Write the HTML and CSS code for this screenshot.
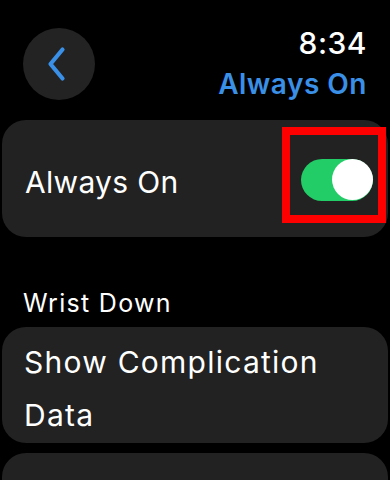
FILE: index.html
```html
<!DOCTYPE html>
<html lang="en">
<head>
<meta charset="utf-8">
<title>Always On</title>
<link rel="stylesheet" href="styles.css">
</head>
<body>
<div class="screen">
  <header class="top">
    <button class="back" aria-label="Back">
      <svg width="72" height="72" viewBox="0 0 72 72" aria-hidden="true">
        <path d="M39.5 21.5 L27.5 36 L39.5 50.5" fill="none" stroke="#3a8fe6" stroke-width="4.2" stroke-linecap="round" stroke-linejoin="round"/>
      </svg>
    </button>
    <div class="titles">
      <div class="time">8:34</div>
      <div class="title">Always On</div>
    </div>
  </header>

  <div class="card toggle-row">
    <span class="label">Always On</span>
    <span class="switch" role="switch" aria-checked="true"><span class="knob"></span></span>
    <span class="highlight" aria-hidden="true"></span>
  </div>

  <div class="section">Wrist Down</div>

  <div class="card multi">Show Complication<br>Data</div>

  <div class="card empty"></div>
</div>
</body>
</html>
```

FILE: styles.css
```css
html, body {
  margin: 0;
  padding: 0;
  background: #000;
}

body {
  font-family: Inter, "Noto Sans", "Liberation Sans", sans-serif;
  color: #fff;
  width: 390px;
  height: 480px;
  overflow: hidden;
}

.screen {
  display: flex;
  flex-direction: column;
  padding: 0 2px;
}

.top {
  height: 120px;
  display: flex;
  justify-content: space-between;
  align-items: flex-start;
  padding: 0 21px;
}

.back {
  margin-top: 28px;
  width: 72px;
  height: 72px;
  border-radius: 50%;
  background: #232323;
  border: 0;
  padding: 0;
  display: flex;
  align-items: center;
  justify-content: center;
}

.titles {
  display: flex;
  flex-direction: column;
  align-items: flex-end;
  padding-top: 25px;
}

.time {
  font-size: 30px;
  line-height: 36px;
  font-weight: 500;
  letter-spacing: 0.5px;
}

.title {
  margin-top: 5px;
  font-size: 28px;
  line-height: 36px;
  font-weight: 600;
  letter-spacing: 0.5px;
  color: #3a8fe6;
}

.card {
  background: #222;
  border-radius: 24px;
}

.toggle-row {
  position: relative;
  height: 117px;
  box-sizing: border-box;
  padding: 6px 15px 0 23px;
  display: flex;
  align-items: center;
  justify-content: space-between;
}

.label {
  font-size: 30px;
  line-height: 40px;
  letter-spacing: 0.3px;
}

.switch {
  width: 72px;
  height: 42px;
  border-radius: 21px;
  background: #22cc67;
  display: flex;
  justify-content: flex-end;
  align-items: center;
  margin-top: -4px;
}

.knob {
  width: 41px;
  height: 41px;
  border-radius: 50%;
  background: #fff;
  margin-right: 0.5px;
}

.highlight {
  position: absolute;
  left: 280px;
  top: 7px;
  width: 104px;
  height: 96px;
  box-sizing: border-box;
  border: 8px solid #f00;
}

.section {
  margin: 51px 0 9px 21px;
  font-size: 25px;
  line-height: 30px;
  letter-spacing: 1.3px;
}

.multi {
  height: 116px;
  box-sizing: border-box;
  padding: 9px 20px 0 22px;
  font-size: 30px;
  line-height: 53px;
  letter-spacing: 1.25px;
}

.empty {
  margin-top: 10px;
  height: 27px;
  border-radius: 24px 24px 0 0;
}
```
